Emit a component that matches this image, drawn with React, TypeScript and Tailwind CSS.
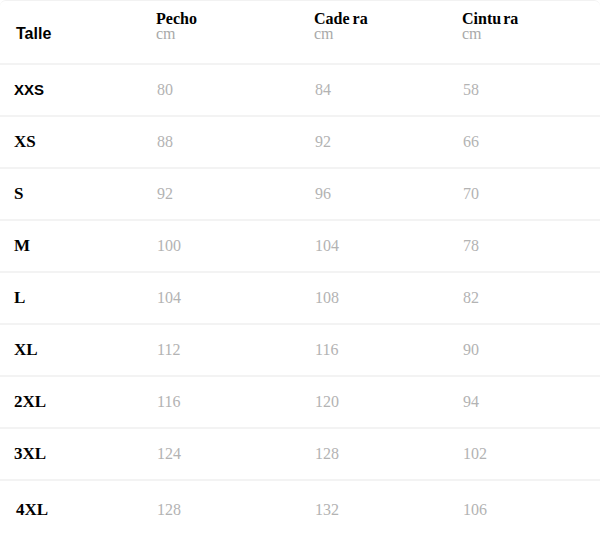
import React from "react";

type Row = {
  size: string;
  pecho: number;
  cadera: number;
  cintura: number;
  sans?: boolean;
};

const rows: Row[] = [
  { size: "XXS", pecho: 80, cadera: 84, cintura: 58, sans: true },
  { size: "XS", pecho: 88, cadera: 92, cintura: 66 },
  { size: "S", pecho: 92, cadera: 96, cintura: 70 },
  { size: "M", pecho: 100, cadera: 104, cintura: 78 },
  { size: "L", pecho: 104, cadera: 108, cintura: 82 },
  { size: "XL", pecho: 112, cadera: 116, cintura: 90 },
  { size: "2XL", pecho: 116, cadera: 120, cintura: 94 },
  { size: "3XL", pecho: 124, cadera: 128, cintura: 102 },
  { size: "4XL", pecho: 128, cadera: 132, cintura: 106 },
];

const grid = "grid grid-cols-[156px_158px_148px_1fr] items-center";

const HeaderCell: React.FC<{ children: React.ReactNode }> = ({ children }) => (
  <div className="flex flex-col self-start pt-[10px]">
    <span className="font-['Liberation_Serif',serif] text-[16px] font-bold leading-[15px] text-black">
      {children}
    </span>
    <span className="font-['Liberation_Serif',serif] text-[16px] leading-[15px] text-[#a9a9a9]">
      cm
    </span>
  </div>
);

const App: React.FC = () => {
  return (
    <div className="w-[600px] h-[537px] bg-white">
      {/* Size chart card */}
      <div className="h-full rounded-md border-t border-[#f2f2f2] bg-white overflow-hidden">
        {/* Table header */}
        <div className={`${grid} h-[64px] border-b-2 border-[#f3f3f3]`}>
          <span className="pl-4 pt-[3px] font-['Liberation_Sans',sans-serif] text-[16px] font-bold text-black">
            Talle
          </span>
          <HeaderCell>Pecho</HeaderCell>
          <HeaderCell>
            Cade<span className="ml-[3px]">ra</span>
          </HeaderCell>
          <HeaderCell>
            Cintu<span className="ml-[2px]">ra</span>
          </HeaderCell>
        </div>

        {/* Table rows */}
        {rows.map((row, i) => (
          <div
            key={row.size}
            className={`${grid} ${
              i === rows.length - 1 ? "h-[57px] pt-px" : "h-[52px] border-b-2 border-[#f3f3f3]"
            }`}
          >
            <span
              className={
                row.sans
                  ? "pl-[14px] font-['Liberation_Sans',sans-serif] text-[15px] font-bold text-black"
                  : i === rows.length - 1
                  ? "pl-4 font-['Liberation_Serif',serif] text-[17px] font-bold text-black"
                  : "pl-[14px] font-['Liberation_Serif',serif] text-[17px] font-bold text-black"
              }
            >
              {row.size}
            </span>
            <span className="pl-px font-['Liberation_Serif',serif] text-[16px] text-[#b3b3b3]">
              {row.pecho}
            </span>
            <span className="pl-px font-['Liberation_Serif',serif] text-[16px] text-[#b3b3b3]">
              {row.cadera}
            </span>
            <span className="pl-px font-['Liberation_Serif',serif] text-[16px] text-[#b3b3b3]">
              {row.cintura}
            </span>
          </div>
        ))}
      </div>
    </div>
  );
};

export default App;
